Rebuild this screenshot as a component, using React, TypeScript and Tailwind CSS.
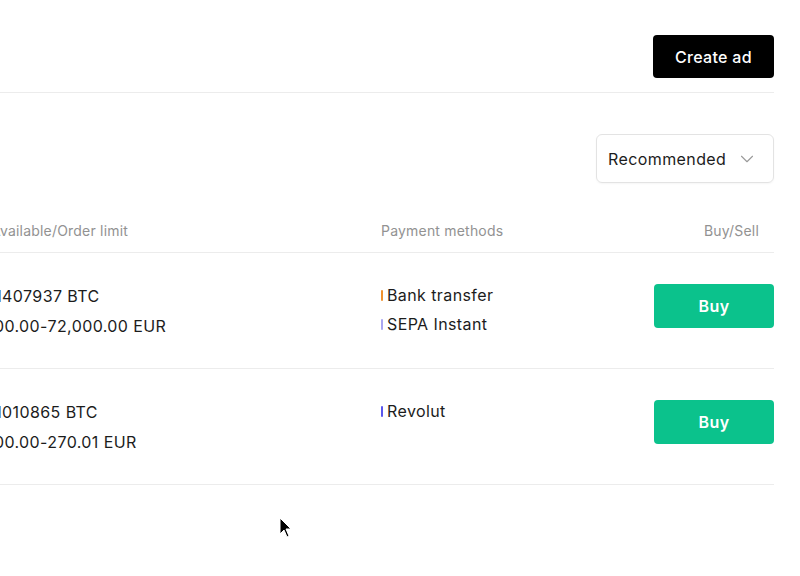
import { ChevronDown } from "lucide-react";

type Ad = {
  amount: string;
  limit: string;
  methods: { name: string; color: string }[];
};

const ADS: Ad[] = [
  {
    amount: "0.01407937 BTC",
    limit: "100.00-72,000.00 EUR",
    methods: [
      { name: "Bank transfer", color: "bg-[#f0922e]" },
      { name: "SEPA Instant", color: "bg-[#a9a6f2]" },
    ],
  },
  {
    amount: "0.01010865 BTC",
    limit: "100.00-270.01 EUR",
    methods: [{ name: "Revolut", color: "bg-[#5a57ee]" }],
  },
];

function Cursor() {
  return (
    <svg
      className="pointer-events-none absolute left-[279px] top-[517px]"
      width="14"
      height="22"
      viewBox="0 0 14 22"
    >
      <path d="M1 1 L1 17 L5 13 L8 20 L10 19 L7 12 L12 12 Z" fill="#000" stroke="#fff" strokeWidth="1" />
    </svg>
  );
}

function AdRow({ ad }: { ad: Ad }) {
  return (
    <div className="flex h-[116px] items-start border-b border-[#ececec] pt-[28px] tracking-[0.4px]">
      <div className="w-[381px] whitespace-nowrap text-[16px] leading-[30px] text-[#1c1c1c]">
        <div className="ml-[-30px]">{ad.amount}</div>
        <div className="ml-[-13px]">{ad.limit}</div>
      </div>
      <div className="flex-1 text-[16px] leading-[29px] text-[#1c1c1c]">
        {ad.methods.map((m) => (
          <div key={m.name} className="flex items-center gap-[4px]">
            <span className={`h-[11px] w-[2px] rounded-full ${m.color}`} />
            <span>{m.name}</span>
          </div>
        ))}
      </div>
      <button
        type="button"
        className="mt-[3px] h-[44px] w-[120px] rounded-[4px] bg-[#0bc28c] text-[16px] font-semibold text-white"
      >
        Buy
      </button>
    </div>
  );
}

export default function App() {
  return (
    <div
      className="relative h-[576px] w-[800px] overflow-hidden bg-white"
      style={{ fontFamily: "Inter, 'Noto Sans', sans-serif" }}
    >
      <div className="w-[774px]">
        <header className="flex h-[93px] items-start justify-end border-b border-[#ececec] pt-[35px]">
          <button
            type="button"
            className="h-[43px] w-[121px] rounded-[4px] bg-black text-[16px] font-medium tracking-[0.3px] text-white"
          >
            Create ad
          </button>
        </header>

        <div className="flex justify-end pt-[41px]">
          <button
            type="button"
            className="flex h-[49px] w-[178px] items-center justify-between rounded-[6px] border border-[#e3e3e3] pl-[11px] pr-[15px] text-[16px] tracking-[0.4px] text-[#1c1c1c] shadow-[0_1px_2px_rgba(0,0,0,0.04)]"
          >
            <span>Recommended</span>
            <ChevronDown size={22} strokeWidth={1.2} className="text-[#9a9a9a]" />
          </button>
        </div>

        <div className="mt-[27px] flex h-[43px] items-center border-b border-[#ececec] pb-[2px] text-[14px] tracking-[0.2px] text-[#929292]">
          <div className="ml-[-9px] w-[390px] whitespace-nowrap">Available/Order limit</div>
          <div className="flex-1">Payment methods</div>
          <div className="pr-[15px]">Buy/Sell</div>
        </div>

        {ADS.map((ad) => (
          <AdRow key={ad.amount} ad={ad} />
        ))}
      </div>
      <Cursor />
    </div>
  );
}
